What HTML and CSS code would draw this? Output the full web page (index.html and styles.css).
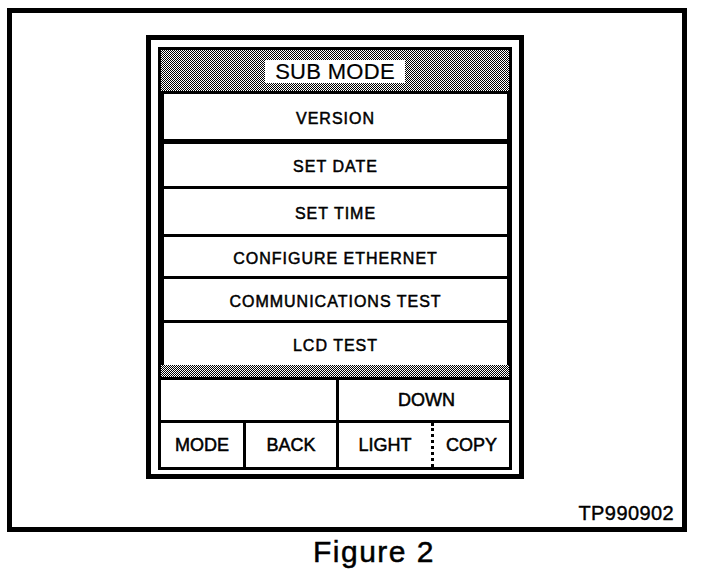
FILE: index.html
```html
<!DOCTYPE html>
<html>
<head>
<meta charset="utf-8">
<link rel="stylesheet" href="styles.css">
</head>
<body>
<div class="frame">
  <div class="panel">
    <div class="screen">
      <div class="header"><span class="title">SUB MODE</span></div>
      <div class="list">
        <div class="item r1">VERSION</div>
        <div class="item r2">SET DATE</div>
        <div class="item r3">SET TIME</div>
        <div class="item r4">CONFIGURE ETHERNET</div>
        <div class="item r5">COMMUNICATIONS TEST</div>
        <div class="item r6">LCD TEST</div>
      </div>
      <div class="strip"></div>
      <div class="keys">
        <div class="key k-blank"></div>
        <div class="key k-down">DOWN</div>
      </div>
      <div class="keys bottom">
        <div class="key k-mode">MODE</div>
        <div class="key k-back">BACK</div>
        <div class="key k-light">LIGHT</div>
        <div class="key k-copy">COPY</div>
      </div>
    </div>
  </div>
  <div class="tag">TP990902</div>
</div>
<div class="caption">Figure 2</div>
</body>
</html>
```
FILE: styles.css
```css
* { box-sizing: border-box; }
html, body { margin: 0; padding: 0; background: #fff; }
body {
  font-family: "Liberation Sans", Arial, sans-serif;
  color: #000;
  width: 704px;
  height: 572px;
  overflow: hidden;
}
.frame {
  margin: 8px 0 0 7px;
  width: 680px;
  height: 524px;
  border: 5px solid #000;
  display: flex;
  flex-direction: column;
}
.panel {
  margin: 22px 0 0 134px;
  width: 378px;
  height: 444px;
  border: 5px solid #000;
  padding: 7px 7px 4px 7px;
}
.screen {
  width: 354px;
  height: 423px;
  border: 3px solid #000;
  display: flex;
  flex-direction: column;
}
.header {
  height: 41px;
  background: repeating-conic-gradient(#000 0 25%, #fff 0 50%) 0 0 / 2px 2px;
  display: flex;
  align-items: center;
  justify-content: center;
  padding-top: 1px;
}
.title {
  background: #fff;
  width: 140px;
  height: 23px;
  line-height: 24px;
  font-size: 22px;
  text-align: center;
  letter-spacing: 0.3px;
  -webkit-text-stroke: 0.2px #000;
}
.list {
  border-top: 3px solid #000;
  border-left: 3px solid #000;
  border-right: 2px solid #000;
  display: flex;
  flex-direction: column;
}
.item {
  display: flex;
  align-items: center;
  justify-content: center;
  font-size: 16px;
  letter-spacing: 1px;
  padding-top: 4px;
  border-bottom: 3px solid #000;
  -webkit-text-stroke: 0.5px #000;
}
.r1 { height: 50px; border-bottom-width: 5px; }
.r2 { height: 45px; }
.r3 { height: 48px; }
.r4 { height: 42px; }
.r5 { height: 44px; }
.r6 { height: 42px; border-bottom: none; }
.strip {
  height: 12px;
  background: repeating-conic-gradient(#000 0 25%, #fff 0 50%) 0 0 / 2px 2px;
}
.keys {
  display: flex;
  height: 43px;
  border-top: 3px solid #000;
}
.keys.bottom { height: 47px; }
.key {
  display: flex;
  align-items: center;
  justify-content: center;
  font-size: 18px;
  padding-top: 1px;
  -webkit-text-stroke: 0.5px #000;
}
.k-blank { width: 178px; border-right: 3px solid #000; }
.k-down { width: 170px; padding-left: 5px; }
.k-mode { width: 85px; border-right: 3px solid #000; }
.k-back { width: 93px; border-right: 3px solid #000; }
.k-light { width: 95px; border-right: 3px dotted #000; }
.k-copy { width: 75px; }
.tag {
  margin-top: auto;
  align-self: flex-end;
  font-size: 20px;
  line-height: 20px;
  letter-spacing: 0.4px;
  padding: 0 8px 4px 0;
  -webkit-text-stroke: 0.4px #000;
}
.caption {
  margin: 5px 0 0 313px;
  font-size: 30px;
  line-height: 30px;
  letter-spacing: 1.5px;
  -webkit-text-stroke: 0.5px #000;
}
```
